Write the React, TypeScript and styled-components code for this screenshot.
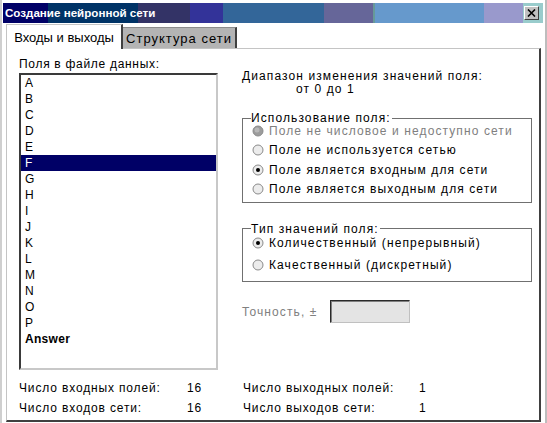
import React from "react";
import styled, { createGlobalStyle } from "styled-components";

const GlobalStyle = createGlobalStyle`
  html, body { margin: 0; padding: 0; background: #fff; }
  body {
    font-family: "Liberation Sans", Arial, sans-serif;
    font-size: 12px;
    color: #000;
  }
  * { box-sizing: border-box; }
`;

const Window = styled.div`
  width: 547px;
  height: 423px;
  overflow: hidden;
  border-left: 2px solid #cfcfcf;
  border-right: 2px solid #bdbdbd;
  padding: 3px 2px 0 1px;
  background: #fff;
  display: flex;
  flex-direction: column;
`;

const TitleBar = styled.div`
  height: 20px;
  display: flex;
  align-items: center;
  background: linear-gradient(
    to right,
    #000066 0px, #000066 45px,
    #003366 45px, #003366 135px,
    #333366 135px, #333366 187px,
    #333399 187px, #333399 220px,
    #336699 220px, #336699 321px,
    #666699 321px, #666699 370px,
    #669999 370px, #669999 372px,
    #6699cc 372px, #6699cc 481px,
    #9999cc 481px, #9999cc 520px,
    #99cccc 520px, #99cccc 540px
  );
`;

const TitleText = styled.div`
  flex: 1;
  padding-left: 2px;
  color: #fff;
  font-weight: bold;
  font-size: 11.6px;
  line-height: 20px;
  white-space: nowrap;
`;

const CloseButton = styled.div`
  width: 15px;
  height: 14px;
  margin-right: 4px;
  background: #c0c0c0;
  border-top: 1px solid #fff;
  border-left: 1px solid #fff;
  border-right: 1px solid #404040;
  border-bottom: 1px solid #404040;
  display: flex;
  align-items: center;
  justify-content: center;
`;

const Body = styled.div`
  flex: 1;
  display: flex;
  flex-direction: column;
  padding-left: 3px;
`;

const TabRow = styled.div`
  height: 24px;
  margin-top: 1px;
  display: flex;
  align-items: flex-end;
`;

const Tab = styled.div<{ $active?: boolean }>`
  position: relative;
  z-index: ${(p) => (p.$active ? 1 : 0)};
  width: ${(p) => (p.$active ? 117 : 114)}px;
  height: ${(p) => (p.$active ? 25 : 21)}px;
  margin-bottom: ${(p) => (p.$active ? -1 : 0)}px;
  background: ${(p) => (p.$active ? "#fff" : "#b4b4b4")};
  border-top: 1px solid ${(p) => (p.$active ? "#c4c4c4" : "#8c8c8c")};
  border-left: ${(p) => (p.$active ? "1px solid #c4c4c4" : "none")};
  border-right: 2px solid #404040;
  font-size: 13px;
  letter-spacing: ${(p) => (p.$active ? 0 : 1)}px;
  display: flex;
  align-items: center;
  justify-content: center;
  white-space: nowrap;
`;

const Panel = styled.div`
  height: 374px;
  margin-right: 2px;
  border-top: 1px solid #c4c4c4;
  border-left: 1px solid #c4c4c4;
  border-right: 2px solid #404040;
  border-bottom: 2px solid #404040;
  padding: 8px 0 0 12px;
  letter-spacing: 0.85px;
`;

const Columns = styled.div`
  display: grid;
  grid-template-columns: 199px 290px;
  column-gap: 24px;
`;

const Column = styled.div<{ $spacing?: number }>`
  display: flex;
  flex-direction: column;
  ${(p) => (p.$spacing !== undefined ? `letter-spacing: ${p.$spacing}px;` : "")}
`;

const Label = styled.div`
  line-height: 14px;
  letter-spacing: 0.7px;
  white-space: nowrap;
`;

const ListBox = styled.div`
  margin-top: 2px;
  height: 297px;
  border-width: 2px;
  border-style: solid;
  border-color: #3a3a3a #c8c8c8 #c8c8c8 #3a3a3a;
  background: #fff;
`;

const ListItem = styled.div<{ $selected?: boolean; $bold?: boolean }>`
  height: 16px;
  line-height: 16px;
  padding-left: 4px;
  background: ${(p) => (p.$selected ? "#000066" : "transparent")};
  color: ${(p) => (p.$selected ? "#fff" : "#000")};
  font-weight: ${(p) => (p.$bold ? "bold" : "normal")};
  letter-spacing: ${(p) => (p.$bold ? 0.3 : 0)}px;
`;

const RangeBlock = styled.div`
  margin-top: 13px;
  line-height: 13px;
  white-space: nowrap;
`;

const RangeValue = styled.div`
  padding-left: 54px;
`;

const GroupBox = styled.div<{ $top: number; $padTop: number; $padBottom: number }>`
  margin-top: ${(p) => p.$top}px;
  border: 1px solid #707070;
  padding-top: ${(p) => p.$padTop}px;
  padding-bottom: ${(p) => p.$padBottom}px;
`;

const Caption = styled.div`
  width: fit-content;
  height: 11px;
  line-height: 11px;
  margin: -6px 0 -3px 8px;
  padding-right: 1px;
  background: #fff;
  white-space: nowrap;
`;

const RadioRow = styled.div<{ $height: number; $disabled?: boolean }>`
  height: ${(p) => p.$height}px;
  line-height: 12px;
  display: flex;
  align-items: center;
  gap: 5px;
  padding-left: 9px;
  color: ${(p) => (p.$disabled ? "#808080" : "#000")};
  white-space: nowrap;
`;

const PrecisionRow = styled.div`
  margin-top: 18px;
  display: flex;
  align-items: center;
  color: #808080;
`;

const PrecisionLabel = styled.div`
  width: 88px;
  white-space: nowrap;
`;

const PrecisionInput = styled.div`
  width: 80px;
  height: 23px;
  background: #e4e4e4;
  border-width: 1px;
  border-style: solid;
  border-color: #2a2a2a #c0c0c0 #c0c0c0 #2a2a2a;
  box-shadow: inset 1px 1px 0 #808080;
`;

const Stats = styled.div`
  margin-top: 8px;
  display: grid;
  grid-template-columns: 168px 56px 176px 1fr;
  grid-auto-rows: 20px;
  line-height: 20px;
  white-space: nowrap;
`;

type RadioState = "off" | "on" | "disabled";

const Radio: React.FC<{ state: RadioState }> = ({ state }) => (
  <svg width="12" height="12" viewBox="0 0 12 12">
    <circle
      cx="6"
      cy="6"
      r="5"
      fill={state === "disabled" ? "#9c9c9c" : "#ececec"}
      stroke="#8a8a8a"
      strokeWidth="1"
    />
    {state === "disabled" && <circle cx="5" cy="5" r="2.5" fill="#b8b8b8" />}
    {state === "on" && <circle cx="6" cy="6" r="2" fill="#000" />}
  </svg>
);

const fields = ["A", "B", "C", "D", "E", "F", "G", "H", "I", "J", "K", "L", "M", "N", "O", "P"];

export default function App() {
  return (
    <>
      <GlobalStyle />
      <Window>
        <TitleBar>
          <TitleText>Создание нейронной сети</TitleText>
          <CloseButton>
            <svg width="9" height="8" viewBox="0 0 9 8">
              <path d="M1 0.5 L8 7.5 M8 0.5 L1 7.5" stroke="#000" strokeWidth="1.6" />
            </svg>
          </CloseButton>
        </TitleBar>
        <Body>
          <TabRow>
            <Tab $active>Входы и выходы</Tab>
            <Tab>Структура сети</Tab>
          </TabRow>
          <Panel>
            <Columns>
              <Column>
                <Label>Поля в файле данных:</Label>
                <ListBox>
                  {fields.map((f) => (
                    <ListItem key={f} $selected={f === "F"}>
                      {f}
                    </ListItem>
                  ))}
                  <ListItem $bold>Answer</ListItem>
                </ListBox>
              </Column>
              <Column $spacing={1.1}>
                <RangeBlock>
                  <div>Диапазон изменения значений поля:</div>
                  <RangeValue>от 0 до 1</RangeValue>
                </RangeBlock>
                <GroupBox $top={22} $padTop={0} $padBottom={3}>
                  <Caption>Использование поля:</Caption>
                  <RadioRow $height={19.5} $disabled>
                    <Radio state="disabled" />
                    Поле не числовое и недоступно сети
                  </RadioRow>
                  <RadioRow $height={19.5}>
                    <Radio state="off" />
                    Поле не используется сетью
                  </RadioRow>
                  <RadioRow $height={19.5}>
                    <Radio state="on" />
                    Поле является входным для сети
                  </RadioRow>
                  <RadioRow $height={19.5}>
                    <Radio state="off" />
                    Поле является выходным для сети
                  </RadioRow>
                </GroupBox>
                <GroupBox $top={25} $padTop={1} $padBottom={5}>
                  <Caption>Тип значений поля:</Caption>
                  <RadioRow $height={22}>
                    <Radio state="on" />
                    Количественный (непрерывный)
                  </RadioRow>
                  <RadioRow $height={22}>
                    <Radio state="off" />
                    Качественный (дискретный)
                  </RadioRow>
                </GroupBox>
                <PrecisionRow>
                  <PrecisionLabel>Точность, ±</PrecisionLabel>
                  <PrecisionInput />
                </PrecisionRow>
              </Column>
            </Columns>
            <Stats>
              <div>Число входных полей:</div>
              <div>16</div>
              <div>Число выходных полей:</div>
              <div>1</div>
              <div>Число входов сети:</div>
              <div>16</div>
              <div>Число выходов сети:</div>
              <div>1</div>
            </Stats>
          </Panel>
        </Body>
      </Window>
    </>
  );
}
